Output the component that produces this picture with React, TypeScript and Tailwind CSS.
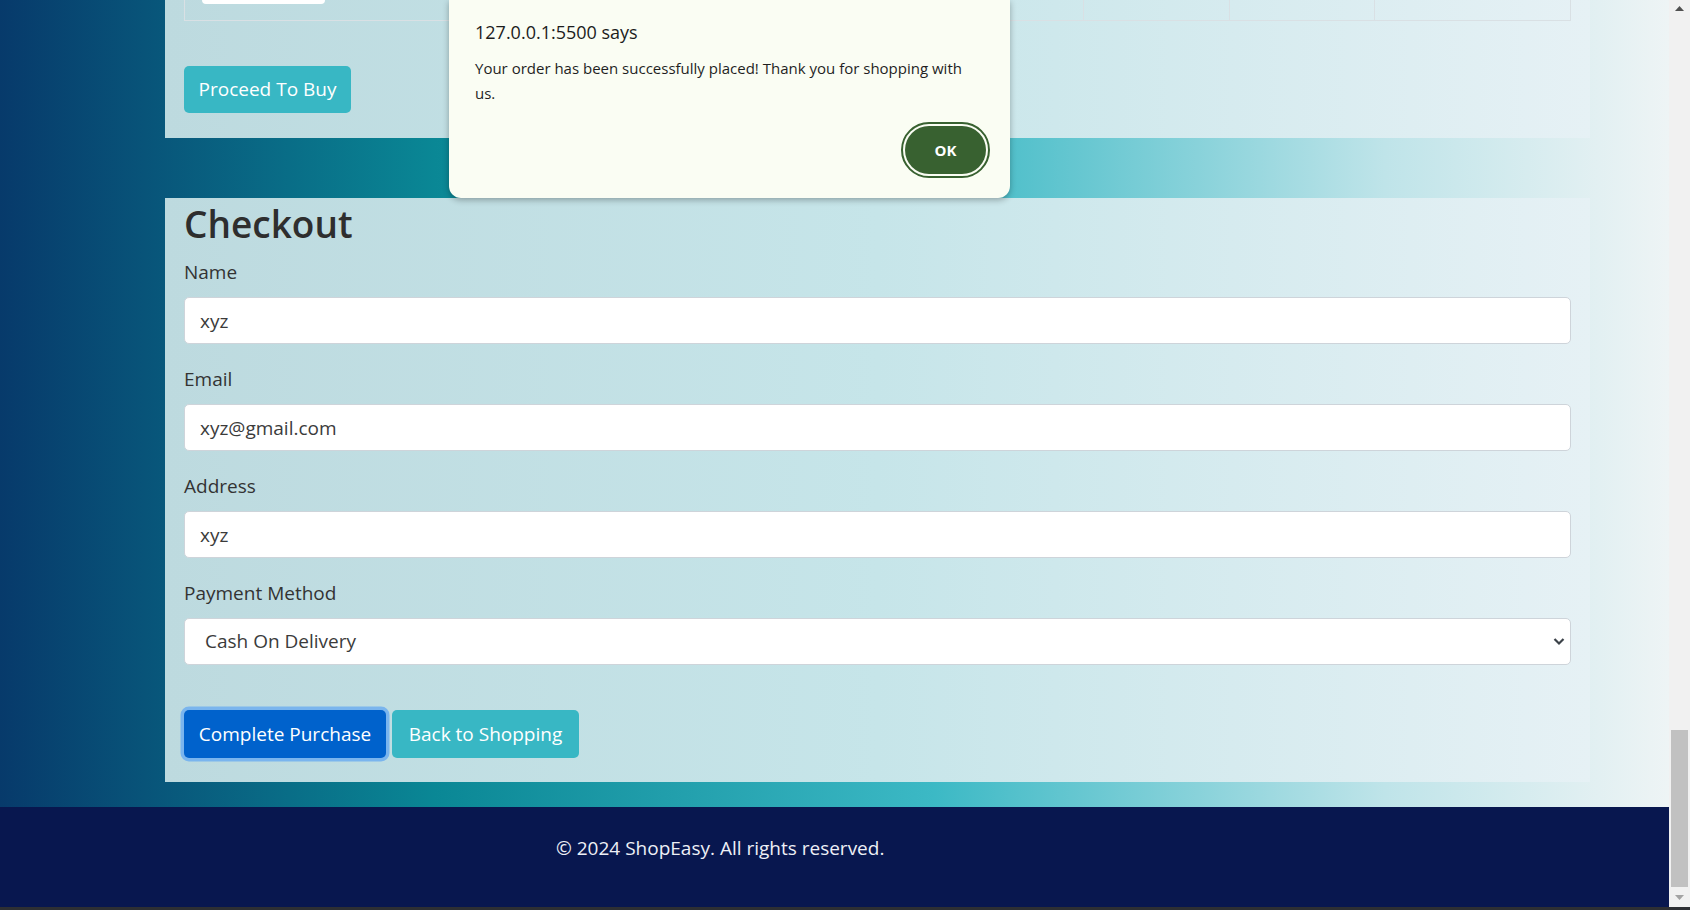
const Field = ({ label, value }: { label: string; value: string }) => (
  <div className="mb-[20px]">
    <label className="block mb-[10px] text-[19px] leading-[30px] text-[#333]">{label}</label>
    <input
      readOnly
      defaultValue={value}
      className="w-full h-[47px] px-[15px] bg-white border border-[#ced4da] rounded-[5px] text-[19px] text-[#3b3b3b] outline-none"
    />
  </div>
);

const Scrollbar = () => (
  <div className="w-[21px] bg-[#f1f1f1] flex flex-col">
    <div className="h-[17px] flex items-center justify-center">
      <svg width="9" height="5" viewBox="0 0 9 5">
        <path d="M0 5 L4.5 0 L9 5 Z" fill="#505050" />
      </svg>
    </div>
    <div className="flex-1" />
    <div className="h-[157px] ml-[2px] mr-[2px] bg-[#c1c1c1]" />
    <div className="h-[20px] flex items-center justify-center">
      <svg width="9" height="5" viewBox="0 0 9 5">
        <path d="M0 0 L9 0 L4.5 5 Z" fill="#a3a3a3" />
      </svg>
    </div>
  </div>
);

const App = () => {
  return (
    <div className="h-[910px] overflow-hidden flex flex-col font-['Open_Sans',sans-serif]">
      <div className="flex flex-1 min-h-0">
        <div className="relative flex-1 flex flex-col bg-[linear-gradient(to_right,#073a6b_0%,#0a8795_26%,#3cb9c5_56%,#bfe4e9_83%,#eef4f5_100%)]">
          {/* Cart section (scrolled, only the bottom shows) */}
          <div className="ml-[165px] w-[1425px] px-[19px] pb-[25px] bg-[linear-gradient(to_right,#bddadf,#c6e5e9_50%,#e6f1f5)]">
            <div className="flex h-[21px] border-x border-b border-[#d9e0e4]">
              <div className="w-[898px] pl-[17px]">
                <div className="w-[123px] h-[4px] bg-white rounded-b-[4px]" />
              </div>
              <div className="w-[146px] border-l border-[#d9e0e4]" />
              <div className="w-[145px] border-l border-[#d9e0e4]" />
              <div className="flex-1 border-l border-[#d9e0e4]" />
            </div>
            <button className="mt-[45px] w-[167px] h-[47px] rounded-[5px] bg-[#38b7c4] text-white text-[19px]">
              Proceed To Buy
            </button>
          </div>

          <div className="h-[60px]" />

          {/* Checkout */}
          <div className="ml-[165px] w-[1425px] px-[19px] pt-[2px] pb-[24px] bg-[linear-gradient(to_right,#bddadf,#c6e5e9_50%,#e6f1f5)]">
            <h1 className="text-[37px] leading-[48px] font-semibold text-[#2e2e2e] mb-[9px]">Checkout</h1>
            <Field label="Name" value="xyz" />
            <Field label="Email" value="xyz@gmail.com" />
            <Field label="Address" value="xyz" />
            <div>
              <label className="block mb-[10px] text-[19px] leading-[30px] text-[#333]">Payment Method</label>
              <div className="relative">
                <select className="appearance-none w-full h-[47px] pl-[20px] bg-white border border-[#ced4da] rounded-[5px] text-[19px] text-[#3b3b3b] outline-none">
                  <option>Cash On Delivery</option>
                  <option>Credit Card</option>
                </select>
                <svg
                  className="absolute right-[6px] top-[19px] pointer-events-none"
                  width="12"
                  height="9"
                  viewBox="0 0 12 9"
                >
                  <path d="M1.5 2 L6 6.5 L10.5 2" fill="none" stroke="#3c4249" strokeWidth="2.2" />
                </svg>
              </div>
            </div>
            <div className="flex gap-[6px] mt-[45px]">
              <button className="w-[202px] h-[48px] rounded-[5px] bg-[#0062cc] text-white text-[19px] shadow-[0_0_0_3.5px_#7ab5ee]">
                Complete Purchase
              </button>
              <button className="w-[187px] h-[48px] rounded-[5px] bg-[#38b7c4] text-white text-[19px]">
                Back to Shopping
              </button>
            </div>
          </div>

          <div className="flex-1" />

          <footer className="h-[100px] bg-[#08174f] pt-[26px] pl-[556px]">
            <p className="text-[19px] leading-[30px] text-[#eef0f6]">© 2024 ShopEasy. All rights reserved.</p>
          </footer>

          {/* Browser alert */}
          <div className="absolute left-[449px] top-0 w-[561px] h-[198px] bg-[#fafdf3] rounded-b-[12px] shadow-[0_2px_6px_rgba(0,0,0,0.3)] pl-[26px] pr-[20px] pt-[20px]">
            <p className="text-[18px] leading-[24px] font-medium text-[#1c1c1c]">127.0.0.1:5500 says</p>
            <p className="mt-[12px] text-[15px] leading-[25px] text-[#1f1f1f]">
              Your order has been successfully placed! Thank you for shopping with
              <br />
              us.
            </p>
            <div className="flex justify-end mt-[20px]">
              <button className="mr-[4px] w-[81px] h-[48px] rounded-full bg-[#386130] text-white text-[15px] font-bold outline-2 outline-[#386130] outline-offset-2">
                OK
              </button>
            </div>
          </div>
        </div>
        <Scrollbar />
      </div>
      <div className="h-[3px] bg-[#2d2f33]" />
    </div>
  );
};

export default App;
